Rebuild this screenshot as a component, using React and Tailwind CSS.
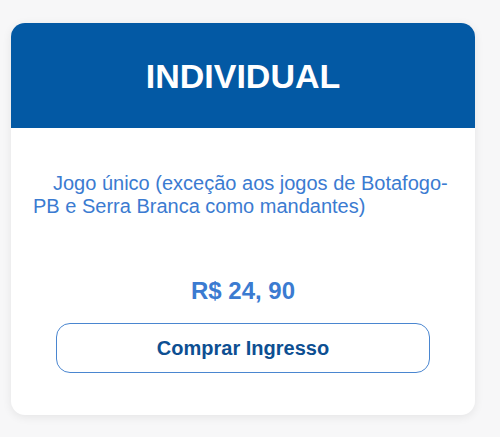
export default function App() {
  return (
    <div className="min-h-[437px] w-[500px] bg-[#f7f7f8] pt-[23px] pl-[11px]" style={{ fontFamily: '"Liberation Sans", Arial, sans-serif' }}>
      <div className="w-[464px] rounded-[14px] bg-white shadow-[0_2px_10px_rgba(0,0,0,0.08)] overflow-hidden">
        <div className="h-[105px] bg-[#0359a4] flex items-center justify-center">
          <h2 className="text-[34px] font-bold text-white leading-none">INDIVIDUAL</h2>
        </div>
        <div className="px-[22px] pt-[44px] pb-[42px]">
          <p className="text-[20px] leading-[23px] text-[#3b7bd1] indent-[20px]">
            Jogo único (exceção aos jogos de Botafogo-PB e Serra Branca como mandantes)
          </p>
          <p className="mt-[59px] text-center text-[24px] leading-[28px] font-bold text-[#3b7bd1]">R$ 24, 90</p>
          <div className="mt-[18px] flex justify-center">
            <button className="w-[374px] h-[50px] rounded-[14px] border border-[#4a86d0] bg-white text-[20px] font-bold text-[#0d4f92]">
              Comprar Ingresso
            </button>
          </div>
        </div>
      </div>
    </div>
  );
}
